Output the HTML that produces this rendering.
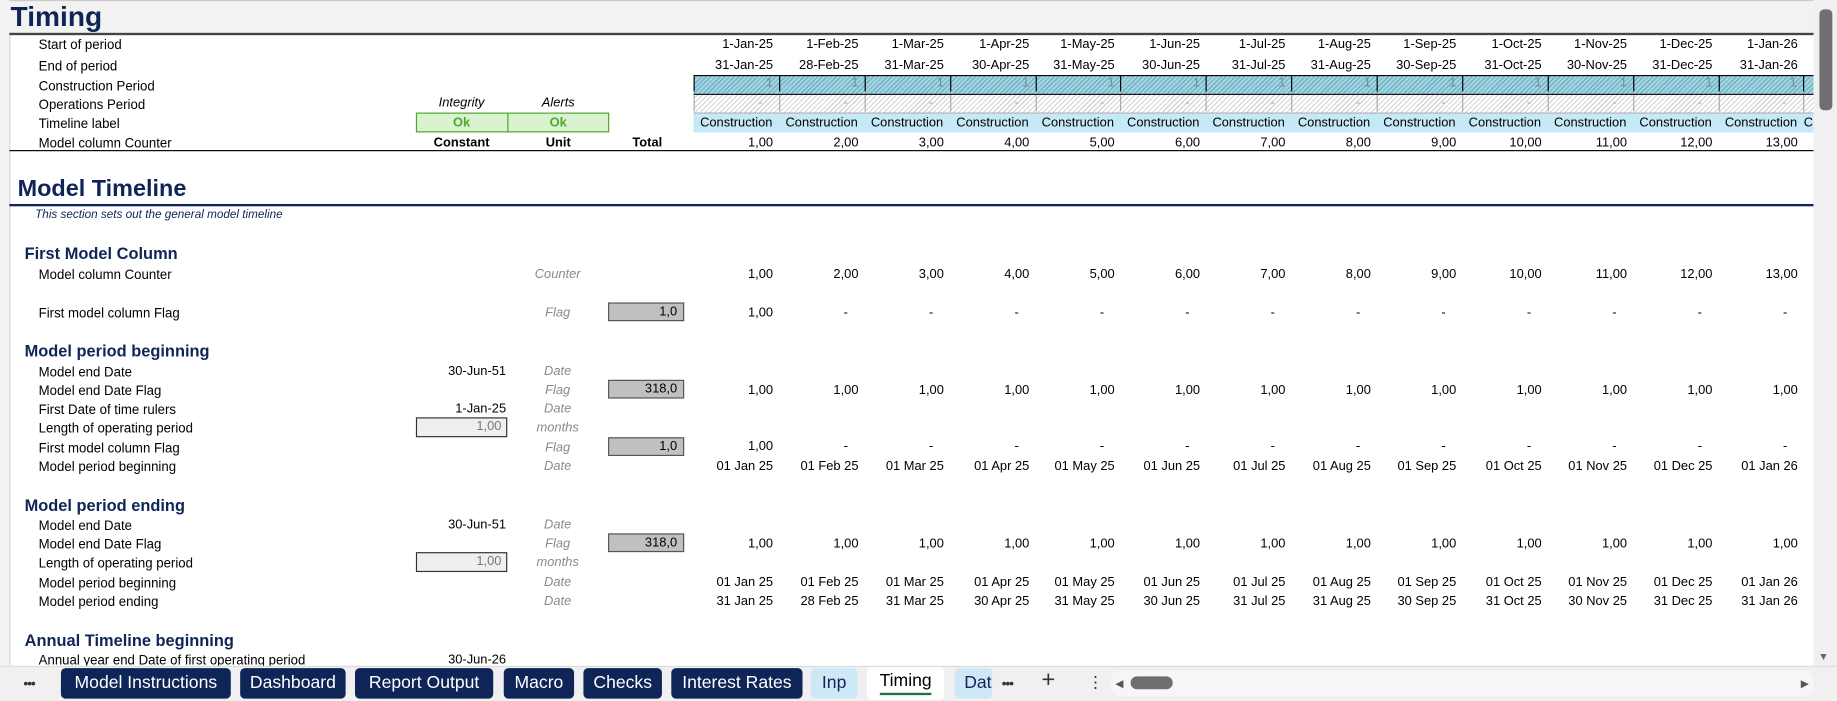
<!DOCTYPE html>
<html><head><meta charset="utf-8">
<style>
html,body{margin:0;padding:0;width:1837px;height:701px;overflow:hidden;background:#fff}
#s{position:absolute;left:0;top:0;width:1568px;height:598px;transform:scale(1.17156,1.17224);transform-origin:0 0;font-family:"Liberation Sans",Arial,sans-serif;font-size:11px;color:#000;overflow:hidden;background:#fff}
.a{position:absolute;white-space:nowrap;line-height:14px}
.l{left:33px;font-size:12px;transform:scaleX(0.94);transform-origin:0 0;margin-top:1px}
.h{left:21px;font-weight:bold;font-size:14px;color:#0f2557;margin-top:1px}
.u{color:#8a8a8a;font-style:italic;width:60px;text-align:center;left:446px}
.r{position:absolute;left:592px;display:flex;line-height:14px;margin-top:1px}
.r span{width:72.9px;text-align:right;padding-right:5px;box-sizing:border-box;flex:none}
.r.d span{padding-right:14px}
.g{position:absolute;left:519px;width:65px;height:16px;background:#c0c0c0;border:1px solid #555;box-sizing:border-box;text-align:right;padding-right:5px;line-height:15px}
.tab{position:absolute;top:570px;height:26px;line-height:26px;background:#0f2557;color:#fff;font-size:15px;text-align:center;border-radius:4px}
</style></head><body><div id="s">
<div style="position:absolute;left:0;top:0;width:8px;height:568px;background:#f3f3f3;border-right:1px solid #d9d9d9"></div>
<div style="position:absolute;left:8px;top:0;width:1540px;height:28px;background:#f2f2f2;border-top:1px solid #ccc"></div>
<div class="a" style="left:9px;top:2px;font-size:24px;line-height:26px;font-weight:bold;color:#0f2557">Timing</div>
<div style="position:absolute;left:8px;top:28px;width:1540px;height:2px;background:#444"></div>

<div class="a l" style="top:30px">Start of period</div>
<div class="a l" style="top:48px">End of period</div>
<div class="a l" style="top:65px">Construction Period</div>
<div class="a l" style="top:81px">Operations Period</div>
<div class="a l" style="top:97px">Timeline label</div>
<div class="a l" style="top:114px">Model column Counter</div>
<div class="a" style="left:355px;width:78px;text-align:center;top:81px;font-style:italic">Integrity</div>
<div class="a" style="left:433px;width:87px;text-align:center;top:81px;font-style:italic">Alerts</div>
<div style="position:absolute;left:355px;top:96px;width:165px;height:17px;background:#d9f2d0;border:1px solid #4ea72e;box-sizing:border-box"></div>
<div style="position:absolute;left:433px;top:96px;width:1px;height:17px;background:#4ea72e"></div>
<div class="a" style="left:355px;width:78px;text-align:center;top:98px;color:#4ea72e;font-weight:bold">Ok</div>
<div class="a" style="left:433px;width:87px;text-align:center;top:98px;color:#4ea72e;font-weight:bold">Ok</div>
<div class="a" style="left:355px;width:78px;text-align:center;top:115px;font-weight:bold">Constant</div>
<div class="a" style="left:433px;width:87px;text-align:center;top:115px;font-weight:bold">Unit</div>
<div class="a" style="left:530px;width:45px;text-align:center;top:115px;font-weight:bold">Total</div>

<div class="r" style="top:30px"><span>1-Jan-25</span><span>1-Feb-25</span><span>1-Mar-25</span><span>1-Apr-25</span><span>1-May-25</span><span>1-Jun-25</span><span>1-Jul-25</span><span>1-Aug-25</span><span>1-Sep-25</span><span>1-Oct-25</span><span>1-Nov-25</span><span>1-Dec-25</span><span>1-Jan-26</span></div>
<div class="r" style="top:48px"><span>31-Jan-25</span><span>28-Feb-25</span><span>31-Mar-25</span><span>30-Apr-25</span><span>31-May-25</span><span>30-Jun-25</span><span>31-Jul-25</span><span>31-Aug-25</span><span>30-Sep-25</span><span>31-Oct-25</span><span>30-Nov-25</span><span>31-Dec-25</span><span>31-Jan-26</span></div>
<div style="position:absolute;left:592px;top:64px;width:956px;height:17px;background:repeating-linear-gradient(135deg,#9fd4e3 0 2px,#6aa9bc 2px 2.8px);border-top:1px solid #000;border-bottom:1px solid #000;box-sizing:border-box"></div>
<div class="r" style="top:64px;color:#6f8f99;margin-top:0"><span style="border-left:1px solid #000">1</span><span style="border-left:1px solid #000">1</span><span style="border-left:1px solid #000">1</span><span style="border-left:1px solid #000">1</span><span style="border-left:1px solid #000">1</span><span style="border-left:1px solid #000">1</span><span style="border-left:1px solid #000">1</span><span style="border-left:1px solid #000">1</span><span style="border-left:1px solid #000">1</span><span style="border-left:1px solid #000">1</span><span style="border-left:1px solid #000">1</span><span style="border-left:1px solid #000">1</span><span style="border-left:1px solid #000;border-right:1px solid #000">1</span></div>
<div style="position:absolute;left:592px;top:81px;width:956px;height:16px;background:repeating-linear-gradient(135deg,#fff 0 2px,#d4d4d4 2px 3px);border-bottom:1px solid #aaa;box-sizing:border-box"></div>
<div class="r d" style="top:80px;color:#aaa"><span style="border-left:1px solid #aaa">-</span><span style="border-left:1px solid #aaa">-</span><span style="border-left:1px solid #aaa">-</span><span style="border-left:1px solid #aaa">-</span><span style="border-left:1px solid #aaa">-</span><span style="border-left:1px solid #aaa">-</span><span style="border-left:1px solid #aaa">-</span><span style="border-left:1px solid #aaa">-</span><span style="border-left:1px solid #aaa">-</span><span style="border-left:1px solid #aaa">-</span><span style="border-left:1px solid #aaa">-</span><span style="border-left:1px solid #aaa">-</span><span style="border-left:1px solid #aaa;border-right:1px solid #aaa">-</span></div>
<div style="position:absolute;left:592px;top:97px;width:956px;height:16px;background:#c6e9f8"></div>
<div class="a" style="left:592px;top:98px">
<span style="display:inline-block;width:72.9px;text-align:center">Construction</span><span style="display:inline-block;width:72.9px;text-align:center">Construction</span><span style="display:inline-block;width:72.9px;text-align:center">Construction</span><span style="display:inline-block;width:72.9px;text-align:center">Construction</span><span style="display:inline-block;width:72.9px;text-align:center">Construction</span><span style="display:inline-block;width:72.9px;text-align:center">Construction</span><span style="display:inline-block;width:72.9px;text-align:center">Construction</span><span style="display:inline-block;width:72.9px;text-align:center">Construction</span><span style="display:inline-block;width:72.9px;text-align:center">Construction</span><span style="display:inline-block;width:72.9px;text-align:center">Construction</span><span style="display:inline-block;width:72.9px;text-align:center">Construction</span><span style="display:inline-block;width:72.9px;text-align:center">Construction</span><span style="display:inline-block;width:72.9px;text-align:center">Construction</span><span style="display:inline-block;width:10px">C</span></div>
<div class="r" style="top:114px"><span>1,00</span><span>2,00</span><span>3,00</span><span>4,00</span><span>5,00</span><span>6,00</span><span>7,00</span><span>8,00</span><span>9,00</span><span>10,00</span><span>11,00</span><span>12,00</span><span>13,00</span></div>
<div style="position:absolute;left:8px;top:128px;width:1540px;height:1px;background:#000"></div>

<div class="a" style="left:15px;top:150px;font-size:20px;line-height:22px;font-weight:bold;color:#0f2557">Model Timeline</div>
<div style="position:absolute;left:8px;top:174px;width:1540px;height:2px;background:#0f2557"></div>
<div class="a" style="left:30px;top:177px;font-size:10px;font-style:italic;color:#0f2557">This section sets out the general model timeline</div>

<div class="a h" style="top:208px">First Model Column</div>
<div class="a l" style="top:226px">Model column Counter</div><div class="a u" style="top:227px">Counter</div>
<div class="r" style="top:226px"><span>1,00</span><span>2,00</span><span>3,00</span><span>4,00</span><span>5,00</span><span>6,00</span><span>7,00</span><span>8,00</span><span>9,00</span><span>10,00</span><span>11,00</span><span>12,00</span><span>13,00</span></div>
<div class="a l" style="top:259px">First model column Flag</div><div class="a u" style="top:260px">Flag</div><div class="g" style="top:258px">1,0</div>
<div class="r d" style="top:259px"><span style="padding-right:5px">1,00</span><span>-</span><span>-</span><span>-</span><span>-</span><span>-</span><span>-</span><span>-</span><span>-</span><span>-</span><span>-</span><span>-</span><span>-</span></div>

<div class="a h" style="top:291px">Model period beginning</div>
<div class="a l" style="top:309px">Model end Date</div><div class="a" style="left:360px;width:72px;text-align:right;top:310px">30-Jun-51</div><div class="a u" style="top:310px">Date</div>
<div class="a l" style="top:325px">Model end Date Flag</div><div class="a u" style="top:326px">Flag</div><div class="g" style="top:324px">318,0</div>
<div class="r" style="top:325px"><span>1,00</span><span>1,00</span><span>1,00</span><span>1,00</span><span>1,00</span><span>1,00</span><span>1,00</span><span>1,00</span><span>1,00</span><span>1,00</span><span>1,00</span><span>1,00</span><span>1,00</span></div>
<div class="a l" style="top:341px">First Date of time rulers</div><div class="a" style="left:360px;width:72px;text-align:right;top:342px">1-Jan-25</div><div class="a u" style="top:342px">Date</div>
<div class="a l" style="top:357px">Length of operating period</div><div style="position:absolute;left:355px;top:356px;width:78px;height:17px;background:#efefef;border:1px solid #333;box-sizing:border-box;text-align:right;padding-right:4px;line-height:15px;color:#777">1,00</div><div class="a u" style="top:358px">months</div>
<div class="a l" style="top:374px">First model column Flag</div><div class="a u" style="top:375px">Flag</div><div class="g" style="top:373px">1,0</div>
<div class="r d" style="top:373px"><span style="padding-right:5px">1,00</span><span>-</span><span>-</span><span>-</span><span>-</span><span>-</span><span>-</span><span>-</span><span>-</span><span>-</span><span>-</span><span>-</span><span>-</span></div>
<div class="a l" style="top:390px">Model period beginning</div><div class="a u" style="top:391px">Date</div>
<div class="r" style="top:390px"><span>01 Jan 25</span><span>01 Feb 25</span><span>01 Mar 25</span><span>01 Apr 25</span><span>01 May 25</span><span>01 Jun 25</span><span>01 Jul 25</span><span>01 Aug 25</span><span>01 Sep 25</span><span>01 Oct 25</span><span>01 Nov 25</span><span>01 Dec 25</span><span>01 Jan 26</span></div>

<div class="a h" style="top:423px">Model period ending</div>
<div class="a l" style="top:440px">Model end Date</div><div class="a" style="left:360px;width:72px;text-align:right;top:441px">30-Jun-51</div><div class="a u" style="top:441px">Date</div>
<div class="a l" style="top:456px">Model end Date Flag</div><div class="a u" style="top:457px">Flag</div><div class="g" style="top:455px">318,0</div>
<div class="r" style="top:456px"><span>1,00</span><span>1,00</span><span>1,00</span><span>1,00</span><span>1,00</span><span>1,00</span><span>1,00</span><span>1,00</span><span>1,00</span><span>1,00</span><span>1,00</span><span>1,00</span><span>1,00</span></div>
<div class="a l" style="top:472px">Length of operating period</div><div style="position:absolute;left:355px;top:471px;width:78px;height:17px;background:#efefef;border:1px solid #333;box-sizing:border-box;text-align:right;padding-right:4px;line-height:15px;color:#777">1,00</div><div class="a u" style="top:473px">months</div>
<div class="a l" style="top:489px">Model period beginning</div><div class="a u" style="top:490px">Date</div>
<div class="r" style="top:489px"><span>01 Jan 25</span><span>01 Feb 25</span><span>01 Mar 25</span><span>01 Apr 25</span><span>01 May 25</span><span>01 Jun 25</span><span>01 Jul 25</span><span>01 Aug 25</span><span>01 Sep 25</span><span>01 Oct 25</span><span>01 Nov 25</span><span>01 Dec 25</span><span>01 Jan 26</span></div>
<div class="a l" style="top:505px">Model period ending</div><div class="a u" style="top:506px">Date</div>
<div class="r" style="top:505px"><span>31 Jan 25</span><span>28 Feb 25</span><span>31 Mar 25</span><span>30 Apr 25</span><span>31 May 25</span><span>30 Jun 25</span><span>31 Jul 25</span><span>31 Aug 25</span><span>30 Sep 25</span><span>31 Oct 25</span><span>30 Nov 25</span><span>31 Dec 25</span><span>31 Jan 26</span></div>

<div class="a h" style="top:538px">Annual Timeline beginning</div>
<div class="a l" style="top:555px">Annual year end Date of first operating period</div><div class="a" style="left:360px;width:72px;text-align:right;top:556px">30-Jun-26</div>

<div style="position:absolute;left:1548px;top:0;width:20px;height:568px;background:#f0f0f0"></div>
<div style="position:absolute;left:1553px;top:8px;width:11px;height:86px;background:#6f6f6f;border-radius:4px"></div>
<div class="a" style="left:1552px;top:553px;font-size:9px;color:#666">▼</div>

<div style="position:absolute;left:0;top:568px;width:1568px;height:30px;background:#f0f0f0;border-top:1px solid #ddd"></div>
<div class="a" style="left:20px;top:576px;font-size:12px;color:#333;letter-spacing:-1px">•••</div>
<div class="tab" style="left:52px;width:145px">Model Instructions</div>
<div class="tab" style="left:205px;width:90px">Dashboard</div>
<div class="tab" style="left:303px;width:118px">Report Output</div>
<div class="tab" style="left:430px;width:60px">Macro</div>
<div class="tab" style="left:498px;width:67px">Checks</div>
<div class="tab" style="left:573px;width:112px">Interest Rates</div>
<div class="tab" style="left:692px;width:40px;background:#cfe8f7;color:#0f2557">Inp</div>
<div class="tab" style="left:740px;width:66px;background:#fff;color:#000;top:569px;height:28px;line-height:24px">Timing</div>
<div style="position:absolute;left:751px;top:591px;width:44px;height:2px;background:#1e7145"></div>
<div class="tab" style="left:815px;width:32px;background:#cfe8f7;color:#0f2557;text-align:left;padding-left:8px;overflow:hidden;box-sizing:border-box">Dat</div>
<div class="a" style="left:855px;top:576px;font-size:12px;color:#333;letter-spacing:-1px">•••</div>
<div class="a" style="left:889px;top:573px;font-size:20px;color:#333">+</div>
<div class="a" style="left:928px;top:575px;font-size:14px;color:#333">⋮</div>
<div style="position:absolute;left:948px;top:572px;width:600px;height:22px;background:#f6f6f6;border-radius:8px"></div>
<div class="a" style="left:952px;top:576px;font-size:9px;color:#555">◀</div>
<div style="position:absolute;left:965px;top:577px;width:36px;height:11px;background:#6f6f6f;border-radius:6px"></div>
<div class="a" style="left:1537px;top:576px;font-size:9px;color:#555">▶</div>
</div></body></html>
